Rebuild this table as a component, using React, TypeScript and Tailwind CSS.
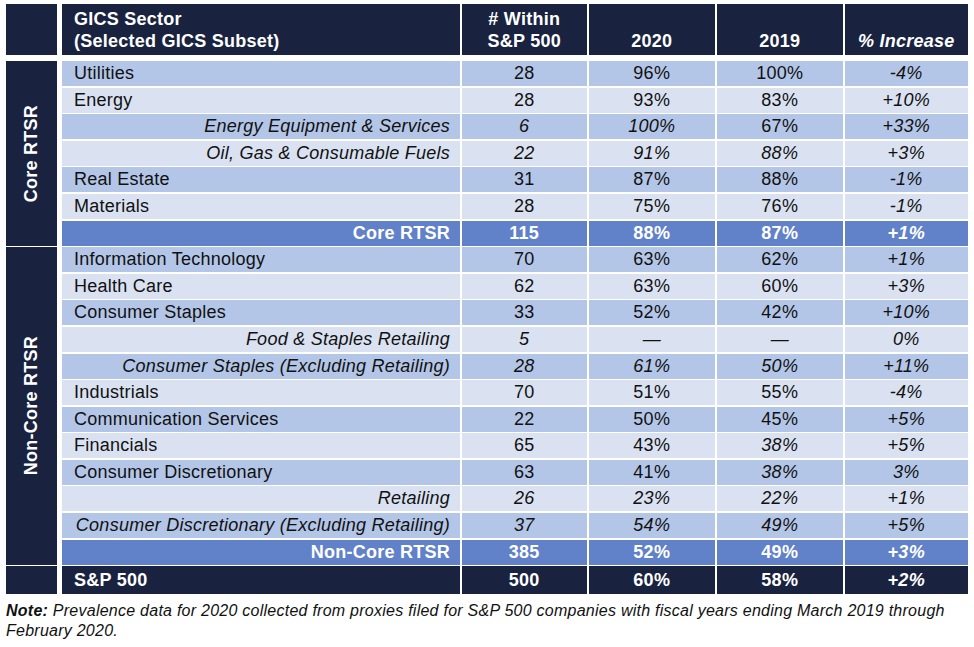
type Row = {
  label: string;
  n: string;
  a: string;
  b: string;
  inc: string;
  sub?: boolean;
  total?: boolean;
  // cell indexes (0..3 -> n, a, b, inc) whose italic state differs from the row default
  flip?: number[];
};

const core: Row[] = [
  { label: "Utilities", n: "28", a: "96%", b: "100%", inc: "-4%" },
  { label: "Energy", n: "28", a: "93%", b: "83%", inc: "+10%" },
  { label: "Energy Equipment & Services", n: "6", a: "100%", b: "67%", inc: "+33%", sub: true, flip: [2] },
  { label: "Oil, Gas & Consumable Fuels", n: "22", a: "91%", b: "88%", inc: "+3%", sub: true },
  { label: "Real Estate", n: "31", a: "87%", b: "88%", inc: "-1%" },
  { label: "Materials", n: "28", a: "75%", b: "76%", inc: "-1%" },
  { label: "Core RTSR", n: "115", a: "88%", b: "87%", inc: "+1%", total: true },
];

const nonCore: Row[] = [
  { label: "Information Technology", n: "70", a: "63%", b: "62%", inc: "+1%" },
  { label: "Health Care", n: "62", a: "63%", b: "60%", inc: "+3%" },
  { label: "Consumer Staples", n: "33", a: "52%", b: "42%", inc: "+10%" },
  { label: "Food & Staples Retailing", n: "5", a: "\u2014", b: "\u2014", inc: "0%", sub: true },
  { label: "Consumer Staples (Excluding Retailing)", n: "28", a: "61%", b: "50%", inc: "+11%", sub: true },
  { label: "Industrials", n: "70", a: "51%", b: "55%", inc: "-4%" },
  { label: "Communication Services", n: "22", a: "50%", b: "45%", inc: "+5%" },
  { label: "Financials", n: "65", a: "43%", b: "38%", inc: "+5%", flip: [2] },
  { label: "Consumer Discretionary", n: "63", a: "41%", b: "38%", inc: "3%", flip: [2] },
  { label: "Retailing", n: "26", a: "23%", b: "22%", inc: "+1%", sub: true },
  { label: "Consumer Discretionary (Excluding Retailing)", n: "37", a: "54%", b: "49%", inc: "+5%", sub: true },
  { label: "Non-Core RTSR", n: "385", a: "52%", b: "49%", inc: "+3%", total: true },
];

function DataRow({ row, idx }: { row: Row; idx: number }) {
  const bg = row.total ? "bg-[#6181c9]" : idx % 2 === 0 ? "bg-[#b4c6e7]" : "bg-[#dae2f2]";
  const text = row.total ? "text-white font-bold" : "text-[#111]";
  const cells = [row.n, row.a, row.b, row.inc];

  return (
    <>
      <div
        className={`${bg} ${text} flex items-center leading-[25px] ${
          row.sub || row.total ? "justify-end pr-[10px]" : "pl-[12px]"
        } ${row.sub ? "italic" : ""}`}
      >
        {row.label}
      </div>
      {cells.map((c, i) => {
        let italic = !!row.sub || i === 3;
        if (row.flip?.includes(i)) italic = !italic;
        return (
          <div
            key={i}
            className={`${bg} ${text} flex items-center justify-center leading-[25px] ${italic ? "italic" : ""}`}
          >
            {c}
          </div>
        );
      })}
    </>
  );
}

export default function App() {
  return (
    <div className="min-h-[647px] w-[974px] bg-white pl-[6px] pt-[4px] font-['Liberation_Sans',Arial,sans-serif] text-[18px] tracking-[0.25px]">
      <div className="grid w-[962px] grid-cols-[54.5px_398px_125.5px_126.5px_126.5px_123.5px] grid-rows-[55.4px_repeat(19,25px)_27.6px] gap-x-[1.5px] gap-y-[1.6px]">
        {/* header */}
        <div className="col-[1] row-[1] mr-[3.5px] h-[51px] self-start bg-[#192340]" />
        <div className="col-[1] row-[2/span_7] mr-[3.5px] flex items-center justify-center bg-[#192340]">
          <span className="rotate-180 font-bold text-white [writing-mode:vertical-rl]">Core RTSR</span>
        </div>
        <div className="col-[1] row-[9/span_12] mr-[3.5px] flex items-center justify-center bg-[#192340]">
          <span className="rotate-180 font-bold text-white [writing-mode:vertical-rl]">Non-Core RTSR</span>
        </div>
        <div className="col-[1] row-[21] mr-[3.5px] bg-[#192340]" />

        <div className="flex h-[51px] flex-col justify-end self-start bg-[#192340] pb-[3px] pl-[12px] font-bold leading-[22px] text-white">
          <span>GICS Sector</span>
          <span>(Selected GICS Subset)</span>
        </div>
        <div className="flex h-[51px] flex-col items-center justify-end self-start bg-[#192340] pb-[3px] font-bold leading-[22px] text-white">
          <span># Within</span>
          <span>S&amp;P 500</span>
        </div>
        <div className="flex h-[51px] items-end justify-center self-start bg-[#192340] pb-[3px] font-bold leading-[22px] text-white">
          2020
        </div>
        <div className="flex h-[51px] items-end justify-center self-start bg-[#192340] pb-[3px] font-bold leading-[22px] text-white">
          2019
        </div>
        <div className="flex h-[51px] items-end justify-center self-start bg-[#192340] pb-[3px] font-bold italic leading-[22px] text-white">
          % Increase
        </div>

        {core.map((r, i) => (
          <DataRow key={r.label} row={r} idx={i} />
        ))}
        {nonCore.map((r, i) => (
          <DataRow key={r.label} row={r} idx={i} />
        ))}

        {/* S&P 500 total */}
        <div className="flex items-center bg-[#192340] pl-[12px] font-bold text-white">S&amp;P 500</div>
        <div className="flex items-center justify-center bg-[#192340] font-bold text-white">500</div>
        <div className="flex items-center justify-center bg-[#192340] font-bold text-white">60%</div>
        <div className="flex items-center justify-center bg-[#192340] font-bold text-white">58%</div>
        <div className="flex items-center justify-center bg-[#192340] font-bold italic text-white">+2%</div>
      </div>

      <p className="mt-[7px] pr-[8px] text-[16px] italic leading-[20px] text-[#111]">
        <span className="font-bold">Note:</span> Prevalence data for 2020 collected from proxies filed for S&amp;P 500
        companies with fiscal years ending March 2019 through February 2020.
      </p>
    </div>
  );
}
